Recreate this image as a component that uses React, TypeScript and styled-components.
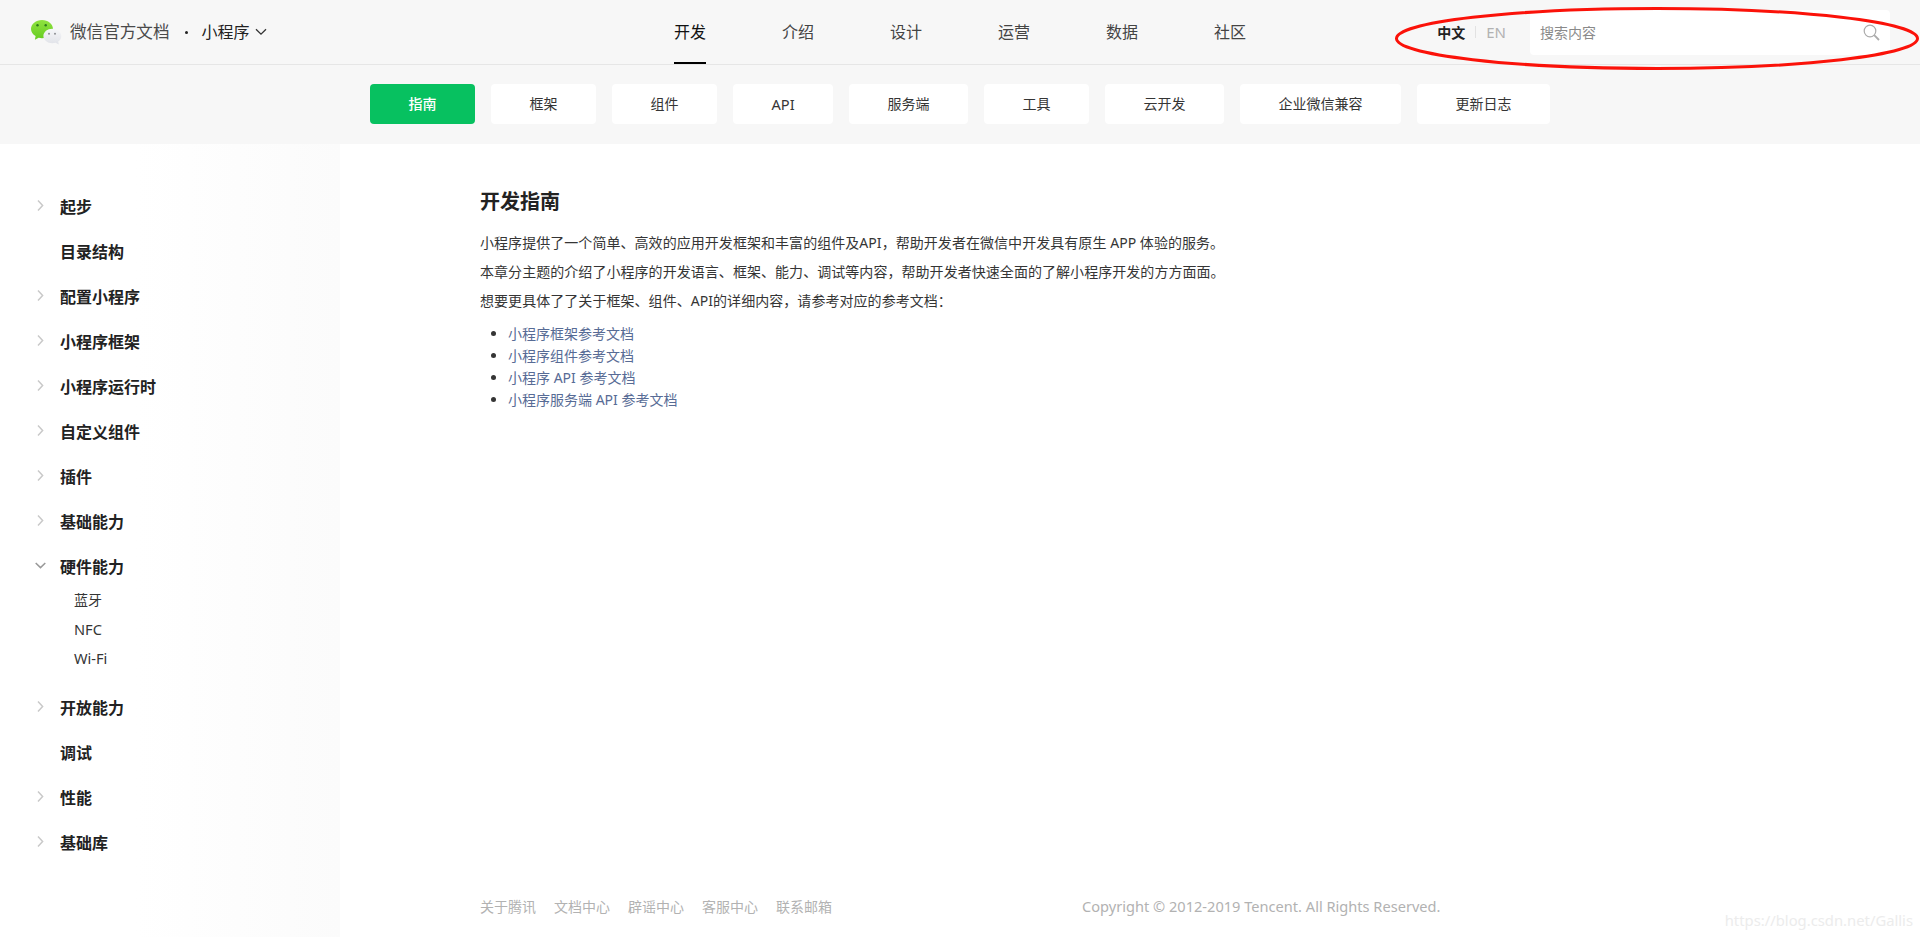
import styled, { createGlobalStyle } from 'styled-components';

const GlobalStyle = createGlobalStyle`
  html, body {
    margin: 0;
    padding: 0;
    background: #fff;
  }
  body {
    font-family: 'Noto Sans', 'Noto Sans CJK SC', sans-serif;
    color: #353535;
  }
  * {
    box-sizing: border-box;
  }
`;

const Page = styled.div`
  position: relative;
  display: flex;
  flex-direction: column;
  height: 100vh;
  overflow: hidden;
`;

const Header = styled.header`
  display: flex;
  align-items: center;
  flex: none;
  height: 65px;
  background: #f7f7f7;
  border-bottom: 1px solid #e6e6e6;
`;

const Brand = styled.div`
  display: flex;
  align-items: center;
  flex: none;
  width: 674px;
  padding-left: 31px;
`;

const LogoMark = styled.svg`
  width: 31px;
  height: 26px;
  margin-right: 8px;
`;

const BrandName = styled.span`
  font-size: 16.6px;
  line-height: 24px;
  color: #4a4a4a;
`;

const BrandDot = styled.span`
  width: 3px;
  height: 3px;
  margin: 0 14px 0 15px;
  border-radius: 50%;
  background: #222;
`;

const Product = styled.span`
  font-size: 16px;
  line-height: 24px;
  color: #222;
`;

const Caret = styled.svg`
  width: 12px;
  height: 8px;
  margin-left: 5px;
  fill: none;
  stroke: #333;
  stroke-width: 1.3;
`;

const TopNav = styled.nav`
  display: flex;
  gap: 76px;
  height: 100%;
`;

const TopLink = styled.a<{ $active?: boolean }>`
  display: block;
  height: 64px;
  padding-top: 20px;
  font-size: 16px;
  line-height: 24px;
  color: ${(p) => (p.$active ? '#111' : '#444')};
  border-bottom: 2px solid ${(p) => (p.$active ? '#000' : 'transparent')};
`;

const HeaderRight = styled.div`
  display: flex;
  align-items: center;
  margin-left: auto;
  padding-right: 30px;
`;

const LangActive = styled.span`
  font-size: 14px;
  font-weight: 700;
  color: #222;
`;

const LangDivider = styled.span`
  width: 1px;
  height: 12px;
  margin: 0 10px;
  background: #e2e2e2;
`;

const LangOther = styled.span`
  font-size: 15px;
  color: #b2b2b2;
  margin-right: 24px;
`;

const SearchBox = styled.div`
  display: flex;
  align-items: center;
  justify-content: space-between;
  width: 360px;
  height: 45px;
  padding: 0 10px;
  background: #fff;
  border-radius: 4px;
`;

const Placeholder = styled.span`
  font-size: 14px;
  color: #8a8a8a;
`;

const SearchIcon = styled.svg`
  width: 17px;
  height: 17px;
  fill: none;
  stroke: #ababab;
  stroke-width: 1.2;
`;

const Annotation = styled.svg`
  position: absolute;
  top: 0;
  right: 0;
  width: 530px;
  height: 76px;
  fill: none;
  stroke: #fb1209;
  stroke-width: 3;
`;

const SubNav = styled.nav`
  display: flex;
  flex: none;
  gap: 16px;
  height: 79px;
  padding: 19px 0 0 370px;
  background: #f7f7f7;
`;

const SubButton = styled.a<{ $active?: boolean; $latin?: boolean }>`
  height: 40px;
  padding: 0 38.5px;
  font-size: ${(p) => (p.$latin ? '14.6px' : '14px')};
  line-height: 40px;
  font-weight: ${(p) => (p.$active ? 500 : 400)};
  color: ${(p) => (p.$active ? '#fff' : '#353535')};
  background: ${(p) => (p.$active ? '#07c160' : '#fff')};
  border-radius: 4px;
`;

const Body = styled.div`
  display: flex;
  flex: 1;
  min-height: 0;
`;

const Sidebar = styled.aside`
  flex: none;
  width: 340px;
  padding: 39px 0 0 35px;
  background: linear-gradient(to right, #fff 40%, #fbfbfb);
`;

const NavItem = styled.div`
  display: flex;
  align-items: center;
  height: 45px;
  font-size: 16px;
  font-weight: 700;
  color: #222;
`;

const ChevronSlot = styled.span`
  display: flex;
  flex: none;
  align-items: center;
  width: 25px;
`;

const Chevron = styled.svg<{ $open?: boolean }>`
  width: 11px;
  height: 11px;
  fill: none;
  stroke: ${(p) => (p.$open ? '#999' : '#c9c9c9')};
  stroke-width: 1.5;
`;

const SubList = styled.div`
  margin: -3px 0 10.5px 39px;
`;

const SubItem = styled.div<{ $latin?: boolean }>`
  height: 29.5px;
  font-size: ${(p) => (p.$latin ? '14.6px' : '14px')};
  line-height: 29.5px;
  color: #353535;
`;

const Main = styled.main`
  display: flex;
  flex: 1;
  flex-direction: column;
  padding: 41px 0 21px 140px;
`;

const Title = styled.h2`
  margin: 0 0 9px;
  font-size: 20px;
  line-height: 34px;
  font-weight: 700;
  color: #222;
`;

const Para = styled.p`
  margin: 0;
  font-size: 14px;
  line-height: 29px;
  letter-spacing: 0.05px;
  color: #353535;
`;

const DocList = styled.ul`
  margin: 8px 0 0;
  padding-left: 28px;
  color: #353535;
`;

const DocItem = styled.li`
  font-size: 14px;
  line-height: 22px;
`;

const DocLink = styled.a`
  color: #576b95;
`;

const Footer = styled.footer`
  display: flex;
  align-items: center;
  margin-top: auto;
  height: 20px;
  font-size: 14px;
  color: #b2b2b2;
`;

const FooterLinks = styled.div`
  display: flex;
  gap: 18px;
  width: 602px;
`;

const Copyright = styled.span`
  font-size: 14.6px;
`;

const Watermark = styled.span`
  position: absolute;
  right: 7px;
  bottom: 7px;
  font-size: 14.8px;
  color: #ececec;
`;

const topLinks = ['开发', '介绍', '设计', '运营', '数据', '社区'];
const subLinks = ['指南', '框架', '组件', 'API', '服务端', '工具', '云开发', '企业微信兼容', '更新日志'];
const docLinks = ['小程序框架参考文档', '小程序组件参考文档', '小程序 API 参考文档', '小程序服务端 API 参考文档'];
const footerLinks = ['关于腾讯', '文档中心', '辟谣中心', '客服中心', '联系邮箱'];

const menuBefore: [string, boolean][] = [
  ['起步', true],
  ['目录结构', false],
  ['配置小程序', true],
  ['小程序框架', true],
  ['小程序运行时', true],
  ['自定义组件', true],
  ['插件', true],
  ['基础能力', true],
];
const menuAfter: [string, boolean][] = [
  ['开放能力', true],
  ['调试', false],
  ['性能', true],
  ['基础库', true],
];

const MenuRow = ({ label, arrow, open }: { label: string; arrow: boolean; open?: boolean }) => (
  <NavItem>
    <ChevronSlot>
      {arrow && (
        <Chevron viewBox='0 0 11 11' $open={open}>
          <path d={open ? 'M0.7 3 L5.5 7.6 L10.3 3' : 'M3 0.6 L7.6 5.5 L3 10.4'} />
        </Chevron>
      )}
    </ChevronSlot>
    {label}
  </NavItem>
);

const Logo = () => (
  <LogoMark viewBox='0 0 31 26'>
    <defs>
      <linearGradient id='logoGreen' x1='0' y1='0' x2='0' y2='1'>
        <stop offset='0' stopColor='#8fe23f' />
        <stop offset='1' stopColor='#66cc22' />
      </linearGradient>
      <linearGradient id='logoGrey' x1='0' y1='0' x2='0' y2='1'>
        <stop offset='0' stopColor='#f6f7f9' />
        <stop offset='1' stopColor='#e0e2e8' />
      </linearGradient>
    </defs>
    <path
      d='M11 1 C17.1 1 22 5 22 10.1 C22 15.2 17.1 19.2 11 19.2 C9.8 19.2 8.7 19 7.6 18.7 L3.9 20.7 L4.6 17.1 C1.8 15.5 0 13 0 10.1 C0 5 4.9 1 11 1 Z'
      fill='url(#logoGreen)'
    />
    <circle cx='6.5' cy='6.3' r='1.2' fill='#2f7a1c' />
    <circle cx='14.7' cy='6.3' r='1.2' fill='#2f7a1c' />
    <path
      d='M21.3 9.8 C26.3 9.8 30.3 13 30.3 17 C30.3 19.3 29.1 21.2 27.2 22.6 L27.8 25.6 L24.6 23.8 C23.6 24.1 22.4 24.2 21.3 24.2 C16.4 24.2 12.4 21 12.4 17 C12.4 13 16.4 9.8 21.3 9.8 Z'
      fill='url(#logoGrey)'
    />
    <circle cx='18' cy='14.8' r='1' fill='#8d8f94' />
    <circle cx='24' cy='14.8' r='1' fill='#8d8f94' />
  </LogoMark>
);

const App = () => (
  <Page>
    <GlobalStyle />
    <Header>
      <Brand>
        <Logo />
        <BrandName>微信官方文档</BrandName>
        <BrandDot />
        <Product>小程序</Product>
        <Caret viewBox='0 0 12 8'>
          <path d='M1 1.2 L6 6.2 L11 1.2' />
        </Caret>
      </Brand>
      <TopNav>
        {topLinks.map((label, i) => (
          <TopLink key={label} $active={i === 0}>
            {label}
          </TopLink>
        ))}
      </TopNav>
      <HeaderRight>
        <LangActive>中文</LangActive>
        <LangDivider />
        <LangOther>EN</LangOther>
        <SearchBox>
          <Placeholder>搜索内容</Placeholder>
          <SearchIcon viewBox='0 0 17 17'>
            <circle cx='7' cy='7' r='5.8' />
            <path d='M11.2 11.2 L16 16' strokeWidth='1.8' />
          </SearchIcon>
        </SearchBox>
      </HeaderRight>
    </Header>
    <SubNav>
      {subLinks.map((label, i) => (
        <SubButton key={label} $active={i === 0} $latin={label === 'API'}>
          {label}
        </SubButton>
      ))}
    </SubNav>
    <Body>
      <Sidebar>
        {menuBefore.map(([label, arrow]) => (
          <MenuRow key={label} label={label} arrow={arrow} />
        ))}
        <MenuRow label='硬件能力' arrow open />
        <SubList>
          <SubItem>蓝牙</SubItem>
          <SubItem $latin>NFC</SubItem>
          <SubItem $latin>Wi-Fi</SubItem>
        </SubList>
        {menuAfter.map(([label, arrow]) => (
          <MenuRow key={label} label={label} arrow={arrow} />
        ))}
      </Sidebar>
      <Main>
        <Title>开发指南</Title>
        <Para>小程序提供了一个简单、高效的应用开发框架和丰富的组件及API，帮助开发者在微信中开发具有原生 APP 体验的服务。</Para>
        <Para>本章分主题的介绍了小程序的开发语言、框架、能力、调试等内容，帮助开发者快速全面的了解小程序开发的方方面面。</Para>
        <Para>想要更具体了了关于框架、组件、API的详细内容，请参考对应的参考文档：</Para>
        <DocList>
          {docLinks.map((label) => (
            <DocItem key={label}>
              <DocLink>{label}</DocLink>
            </DocItem>
          ))}
        </DocList>
        <Footer>
          <FooterLinks>
            {footerLinks.map((label) => (
              <span key={label}>{label}</span>
            ))}
          </FooterLinks>
          <Copyright>Copyright © 2012-2019 Tencent. All Rights Reserved.</Copyright>
        </Footer>
      </Main>
    </Body>
    <Watermark>https://blog.csdn.net/Gallis</Watermark>
    <Annotation viewBox='0 0 530 76'>
      <ellipse cx='267' cy='38.5' rx='260.5' ry='30' />
    </Annotation>
  </Page>
);

export default App;
